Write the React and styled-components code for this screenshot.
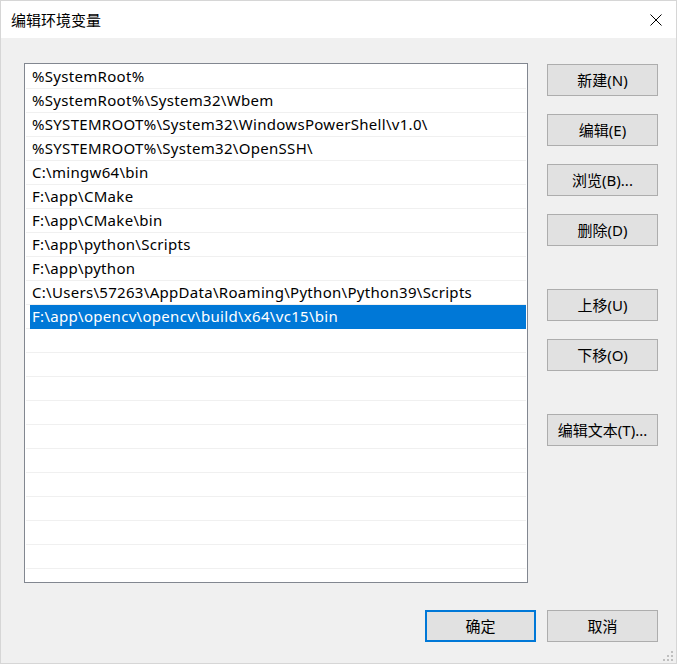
import React from 'react';
import styled, { createGlobalStyle } from 'styled-components';

const GlobalStyle = createGlobalStyle`
  html, body {
    margin: 0;
    padding: 0;
    background: #f0f0f0;
  }
  body {
    font-family: "Noto Sans", "Noto Sans CJK SC", sans-serif;
    color: #000;
  }
`;

const paths = [
  '%SystemRoot%',
  '%SystemRoot%\\System32\\Wbem',
  '%SYSTEMROOT%\\System32\\WindowsPowerShell\\v1.0\\',
  '%SYSTEMROOT%\\System32\\OpenSSH\\',
  'C:\\mingw64\\bin',
  'F:\\app\\CMake',
  'F:\\app\\CMake\\bin',
  'F:\\app\\python\\Scripts',
  'F:\\app\\python',
  'C:\\Users\\57263\\AppData\\Roaming\\Python\\Python39\\Scripts',
  'F:\\app\\opencv\\opencv\\build\\x64\\vc15\\bin',
];
const SELECTED = 10;
const TOTAL_ROWS = 22;

const sideButtons = [
  { label: '新建(N)' },
  { label: '编辑(E)' },
  { label: '浏览(B)...' },
  { label: '删除(D)' },
  { label: '上移(U)', spaced: true },
  { label: '下移(O)' },
  { label: '编辑文本(T)...', spaced: true },
];

const Window = styled.div`
  position: relative;
  width: 677px;
  height: 664px;
  box-sizing: border-box;
  border: 1px solid #d6d6d6;
  display: flex;
  flex-direction: column;
  background: #f0f0f0;
  overflow: hidden;
`;

const TitleBar = styled.div`
  height: 37px;
  flex: none;
  background: #fff;
  display: flex;
  align-items: center;
  justify-content: space-between;
  padding-left: 10px;
`;

const Title = styled.span`
  font-family: "Noto Sans CJK SC", sans-serif;
  font-size: 15px;
  line-height: 1;
`;

const CloseBox = styled.div`
  width: 41px;
  height: 37px;
  display: flex;
  align-items: center;
  justify-content: center;
`;

const Body = styled.div`
  flex: 1;
  display: flex;
  flex-direction: column;
  padding: 25px 18px 0 23px;
`;

const Main = styled.div`
  display: flex;
  gap: 19px;
  align-items: flex-start;
`;

const ListBox = styled.div`
  width: 504px;
  height: 520px;
  box-sizing: border-box;
  border: 1px solid #828790;
  background: #fff;
  padding: 1px;
  overflow: hidden;
`;

const Row = styled.div`
  height: 24px;
  box-sizing: border-box;
  border-bottom: 1px solid #f0f0f0;
  padding-left: 4px;
  display: flex;
`;

const Label = styled.div`
  flex: 1;
  padding-left: 2px;
  height: 23px;
  line-height: 23px;
  font-size: 15px;
  letter-spacing: 0.3px;
  white-space: nowrap;
  background: ${p => (p.$selected ? '#0078d7' : 'transparent')};
  color: ${p => (p.$selected ? '#fff' : '#000')};
  box-shadow: ${p => (p.$selected ? '0 1px 0 #0078d7' : 'none')};
`;

const SideColumn = styled.div`
  display: flex;
  flex-direction: column;
  gap: 18px;
  margin-top: 1px;
`;

const Button = styled.button`
  width: 111px;
  height: 32px;
  box-sizing: border-box;
  margin: ${p => (p.$spaced ? '25px 0 0' : '0')};
  padding: 0 0 2px;
  background: #e1e1e1;
  border: ${p => (p.$primary ? '2px solid #0078d7' : '1px solid #adadad')};
  font-family: "Noto Sans", "Noto Sans CJK SC", sans-serif;
  font-size: 15px;
  color: #000;
`;

const Footer = styled.div`
  display: flex;
  justify-content: flex-end;
  align-items: flex-start;
  gap: 11px;
  margin-top: 27px;
`;

const Grip = styled.svg`
  position: absolute;
  right: 2px;
  bottom: 1px;
`;

function CloseIcon() {
  return (
    <svg width="12" height="12" viewBox="0 0 12 12">
      <path d="M0.5 0.5 L11.5 11.5 M11.5 0.5 L0.5 11.5" stroke="#000" strokeWidth="1" fill="none" />
    </svg>
  );
}

export default function App() {
  const rows = Array.from({ length: TOTAL_ROWS }, (_, i) => paths[i] || '');
  return (
    <Window>
      <GlobalStyle />
      <TitleBar>
        <Title>编辑环境变量</Title>
        <CloseBox>
          <CloseIcon />
        </CloseBox>
      </TitleBar>
      <Body>
        <Main>
          <ListBox>
            {rows.map((text, i) => (
              <Row key={`row-${i}`}>
                <Label $selected={i === SELECTED}>{text}</Label>
              </Row>
            ))}
          </ListBox>
          <SideColumn>
            {sideButtons.map(b => (
              <Button key={b.label} $spaced={b.spaced}>{b.label}</Button>
            ))}
          </SideColumn>
        </Main>
        <Footer>
          <Button $primary>确定</Button>
          <Button>取消</Button>
        </Footer>
      </Body>
      <Grip width="12" height="12" viewBox="0 0 12 12">
        <rect x="9" y="1" width="2" height="2" fill="#bfbfbf" />
        <rect x="5" y="5" width="2" height="2" fill="#bfbfbf" />
        <rect x="9" y="5" width="2" height="2" fill="#bfbfbf" />
        <rect x="1" y="9" width="2" height="2" fill="#bfbfbf" />
        <rect x="5" y="9" width="2" height="2" fill="#bfbfbf" />
        <rect x="9" y="9" width="2" height="2" fill="#bfbfbf" />
      </Grip>
    </Window>
  );
}
